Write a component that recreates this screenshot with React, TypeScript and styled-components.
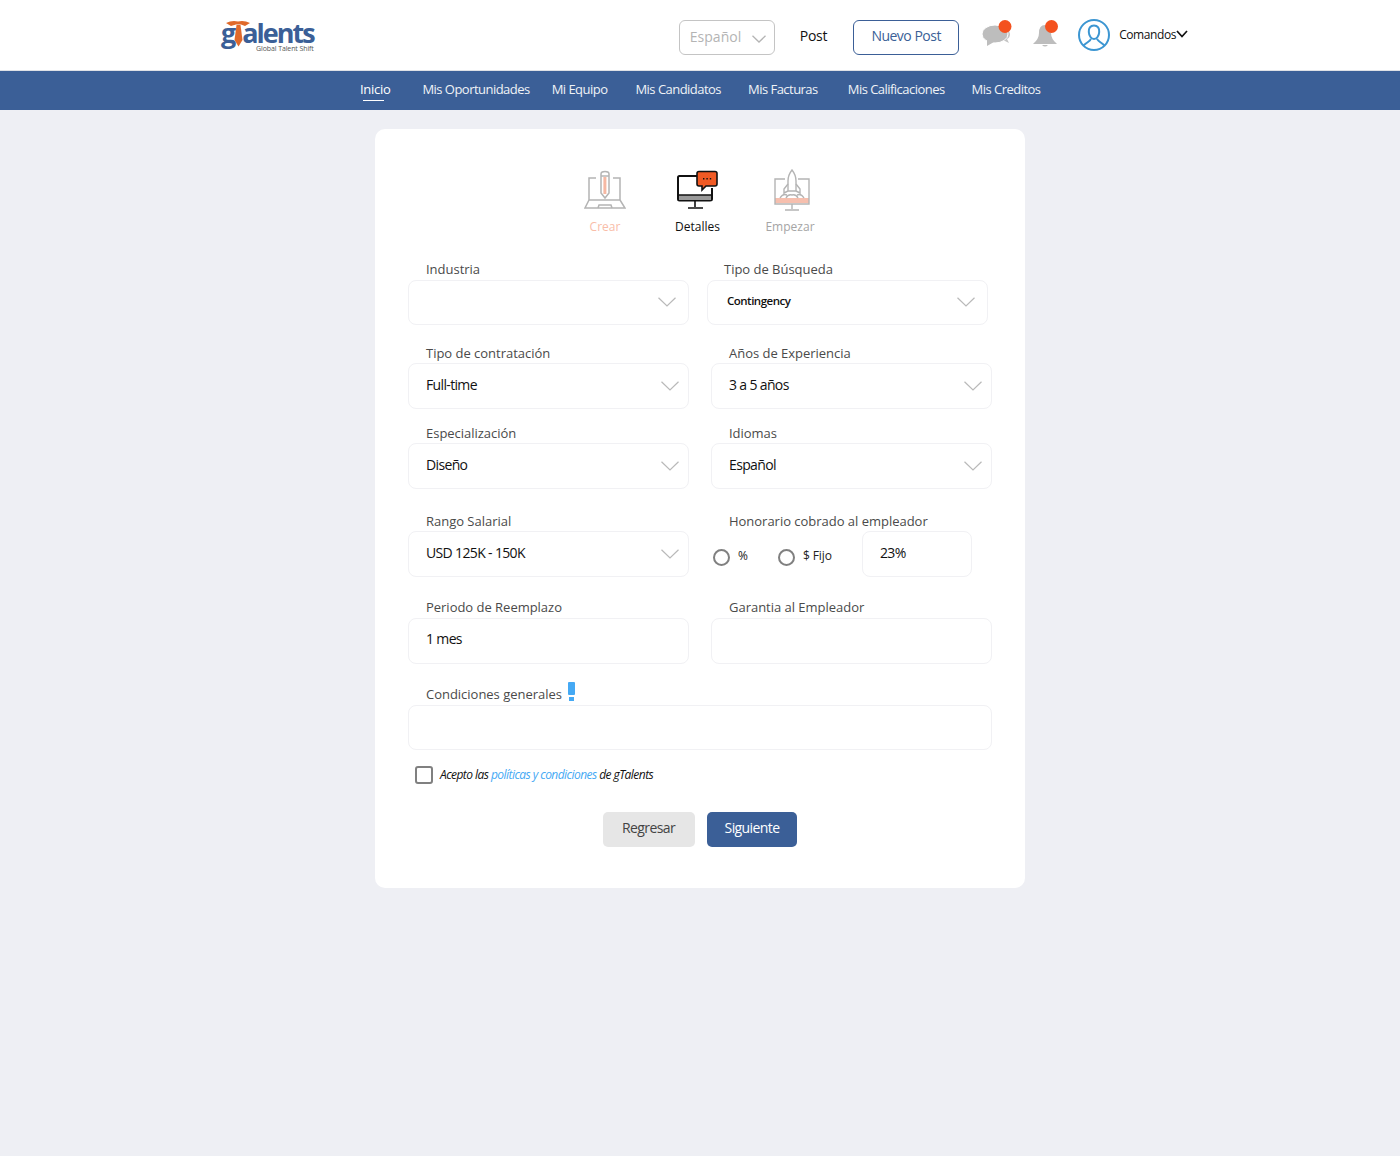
import styled, { createGlobalStyle } from "styled-components";

const GlobalStyle = createGlobalStyle`
  html, body {
    margin: 0;
    padding: 0;
    background: #eeeff4;
    font-family: "Open Sans", "Liberation Sans", sans-serif;
  }
  * {
    box-sizing: border-box;
  }
`;

const Page = styled.div`
  min-height: 1156px;
  background: #eeeff4;
`;

const Header = styled.header`
  height: 71px;
  background: #fff;
  border-bottom: 1px solid #dfe1e6;
  display: flex;
  align-items: flex-start;
  padding: 0 212px 0 221px;
`;

const Logo = styled.div`
  width: 100px;
  margin-top: 20px;
  display: flex;
  flex-direction: column;
  color: #3b5f97;
`;

const LogoWord = styled.div`
  display: flex;
  align-items: flex-start;
  height: 26px;
  font-size: 27px;
  line-height: 26px;
  font-weight: 700;
  letter-spacing: -2px;
`;

const LogoTag = styled.div`
  margin: -1px 0 0 35px;
  font-size: 7px;
  line-height: 7px;
  color: #555;
  letter-spacing: -0.1px;
  white-space: nowrap;
`;

const TieMark = styled.svg`
  flex: none;
  margin: 0 -8px 0 -8px;
`;

const HeaderRight = styled.div`
  margin-left: auto;
  display: flex;
  align-items: center;
  height: 70px;
`;

const LangSelect = styled.div`
  width: 96px;
  height: 35px;
  margin-top: 5px;
  border: 1px solid #c4c4c4;
  border-radius: 6px;
  display: flex;
  align-items: center;
  justify-content: space-between;
  padding: 0 8px 2px 10px;
  font-size: 14px;
  color: #b4b4b4;

  svg {
    margin-top: 4px;
  }
`;

const PostLink = styled.span`
  margin-left: 25px;
  font-size: 14px;
  letter-spacing: -0.3px;
  color: #111;
`;

const NewPost = styled.button`
  width: 106px;
  height: 35px;
  margin: 5px 0 0 26px;
  border: 1px solid #3b5f97;
  border-radius: 6px;
  background: #fff;
  font-family: inherit;
  font-size: 14px;
  letter-spacing: -0.5px;
  color: #3b5f97;
  padding: 0 0 5px;
`;

const ChatIcon = styled.svg`
  margin: 0 0 2px 23px;
  display: block;
`;

const BellIcon = styled.svg`
  margin: 0 0 2px 20px;
  display: block;
`;

const UserIcon = styled.svg`
  margin-left: 19px;
  display: block;
`;

const Commands = styled.span`
  margin-left: 9px;
  padding-bottom: 2px;
  display: flex;
  align-items: center;
  font-size: 12px;
  letter-spacing: -0.42px;
  color: #111;
`;

const Nav = styled.nav`
  height: 39px;
  background: #3b5f97;
  display: flex;
  align-items: center;
  padding: 0 0 3px 360px;
`;

const NavItem = styled.a<{ $left: number; $active?: boolean }>`
  position: relative;
  margin-left: ${(p) => p.$left}px;
  font-size: 13px;
  letter-spacing: -0.53px;
  color: #fff;
  white-space: nowrap;
  opacity: ${(p) => (p.$active ? 1 : 0.92)};

  ${(p) =>
    p.$active &&
    `letter-spacing: -0.3px;
    &::after {
      content: "";
      position: absolute;
      left: 3px;
      right: 6px;
      bottom: -3px;
      height: 1px;
      background: #fff;
    }`}
`;

const Card = styled.main`
  width: 650px;
  margin: 19px auto 0;
  padding: 40px 33px 41px;
  background: #fff;
  border-radius: 10px;
`;

const Steps = styled.div`
  display: flex;
  justify-content: center;
  height: 71px;
  padding-right: 5px;
`;

const Step = styled.div<{ $color: string }>`
  width: 92.5px;
  display: flex;
  flex-direction: column;
  align-items: center;
  font-size: 12px;
  letter-spacing: 0.02px;
  color: ${(p) => p.$color};

  svg {
    display: block;
    margin-bottom: 7px;
  }
`;

const Row = styled.div<{ $top: number; $gap?: number }>`
  margin-top: ${(p) => p.$top}px;
  display: grid;
  grid-template-columns: 281px 281px;
  column-gap: ${(p) => p.$gap ?? 22}px;
`;

const WideRow = styled.div<{ $top: number }>`
  margin-top: ${(p) => p.$top}px;
`;

const Label = styled.div<{ $indent?: number; $tall?: boolean }>`
  height: ${(p) => (p.$tall ? 21 : 20)}px;
  padding-left: ${(p) => p.$indent ?? 18}px;
  font-size: 13px;
  line-height: 20px;
  letter-spacing: -0.02px;
  color: #4a4a4a;
  white-space: nowrap;
`;

const Bang = styled.span`
  position: relative;
  display: inline-block;
  width: 7px;
  height: 13px;
  margin: -2px 0 0 6px;
  border-radius: 1px;
  background: #45a9f4;
  vertical-align: top;

  &::after {
    content: "";
    position: absolute;
    left: 1px;
    top: 15px;
    width: 5px;
    height: 4px;
    background: #45a9f4;
  }
`;

const Box = styled.div<{ $short?: boolean; $inset?: number; $small?: boolean }>`
  height: ${(p) => (p.$short ? 45 : 46)}px;
  border: 1px solid #f1f1f4;
  border-radius: 8px;
  display: flex;
  align-items: center;
  justify-content: space-between;
  padding: 0 ${(p) => p.$inset ?? 9}px 4px ${(p) => (p.$small ? 19 : 17)}px;
  font-size: ${(p) => (p.$small ? 11.5 : 14)}px;
  font-weight: ${(p) => (p.$small ? 600 : 400)};
  letter-spacing: ${(p) => (p.$small ? -0.5 : -0.65)}px;
  color: #111;
`;

const PlainBox = styled(Box)`
  padding-bottom: 6px;
`;

const ChevronMark = styled.svg<{ $drop: number }>`
  display: block;
  margin-top: ${(p) => p.$drop}px;
`;

const FeeRow = styled.div`
  display: flex;
  align-items: flex-start;
`;

const FeeOption = styled.label<{ $width: number }>`
  width: ${(p) => p.$width}px;
  height: 46px;
  padding: 3px 0 0 2px;
  display: flex;
  align-items: center;
  gap: 8px;
  font-size: 12px;
  letter-spacing: -0.1px;
  color: #222;
`;

const RadioDot = styled.span`
  width: 17px;
  height: 17px;
  margin-top: 3px;
  border: 2px solid #808080;
  border-radius: 50%;
  flex: none;
`;

const FeeInput = styled(Box)`
  width: 110px;
  margin-left: 1px;
  padding-bottom: 3px;
`;

const TermsRow = styled.div`
  margin: 16px 0 0 7px;
  height: 18px;
  display: flex;
  align-items: center;
  gap: 7px;
  font-size: 12px;
  font-style: italic;
  letter-spacing: -0.55px;
  color: #111;
`;

const TermsText = styled.span`
  padding-bottom: 2px;
`;

const Check = styled.span`
  width: 18px;
  height: 18px;
  border: 2px solid #808080;
  border-radius: 3px;
  flex: none;
`;

const TermsLink = styled.a`
  color: #45a9f4;
`;

const Actions = styled.div`
  margin-top: 28px;
  display: flex;
  justify-content: center;
  gap: 12px;
`;

const ActionButton = styled.button<{ $primary?: boolean }>`
  width: ${(p) => (p.$primary ? 90 : 92)}px;
  height: 35px;
  border: 0;
  border-radius: 5px;
  padding: 0 ${(p) => (p.$primary ? 0 : 1)}px 4px 0;
  font-family: inherit;
  font-size: 14px;
  letter-spacing: -0.6px;
  background: ${(p) => (p.$primary ? "#3b5f97" : "#e6e6e6")};
  color: ${(p) => (p.$primary ? "#fff" : "#444")};
`;

const navItems = [
  { label: "Inicio", left: 0, active: true },
  { label: "Mis Oportunidades", left: 32 },
  { label: "Mi Equipo", left: 22 },
  { label: "Mis Candidatos", left: 28 },
  { label: "Mis Facturas", left: 27 },
  { label: "Mis Calificaciones", left: 30 },
  { label: "Mis Creditos", left: 27 },
];

function Chevron({ drop }: { drop: number }) {
  return (
    <ChevronMark $drop={drop} width="18" height="10" viewBox="0 0 18 10" fill="none">
      <path d="M0.5 0.8 L9 9 L17.5 0.8" stroke="#b9b9b9" strokeWidth="1.2" />
    </ChevronMark>
  );
}

function Tie() {
  return (
    <TieMark width="24" height="27" viewBox="0 0 24 27">
      <path d="M0 3 Q6 0 12 1.5 Q18 0 24 3 L19 6 L15 4.5 H10 L5 6 Z" fill="#e0692a" />
      <path d="M10.5 5 H14.5 L16.5 20 L12.5 26.5 L8.5 20 Z" fill="#e0692a" />
    </TieMark>
  );
}

function CreateIcon() {
  return (
    <svg width="42" height="42" viewBox="0 0 42 42" fill="none" stroke="#b4b4b4" strokeWidth="1.5">
      <path d="M12 9 H5 V31 H36 V9 H29" />
      <path d="M5 31 L1 39 H41 L36 31" />
      <path d="M14 39 L15 36 H27 L28 39" />
      <rect x="19.4" y="8" width="3" height="17" fill="#f6b8a3" stroke="none" />
      <path d="M17 5 Q17 2.5 21 2.5 Q25 2.5 25 5 V24 L21 29 L17 24 Z" />
      <path d="M17 7 H25" />
    </svg>
  );
}

function DetailsIcon() {
  return (
    <svg width="42" height="42" viewBox="1 0 42 42" fill="none" stroke="#111" strokeWidth="2">
      <path d="M21 7 H3.5 Q2 7 2 8.5 V30 Q2 31.5 3.5 31.5 H34 Q36 31.5 36 30 V19" />
      <rect x="3" y="26" width="32" height="5" fill="#999" stroke="none" />
      <path d="M2 26 H36" strokeWidth="1.5" />
      <path d="M19 32 V38 M12 39 H27" strokeWidth="1.6" />
      <path
        d="M23 2.5 H39 Q41 2.5 41 4.5 V15 Q41 17 39 17 H30 L26 21 V17 H23 Q21 17 21 15 V4.5 Q21 2.5 23 2.5 Z"
        fill="#f15a24"
        strokeWidth="1.6"
      />
      <path d="M27 9.8 H28.4 M30.4 9.8 H31.8 M33.8 9.8 H35.2" strokeWidth="1.4" />
    </svg>
  );
}

function LaunchIcon() {
  return (
    <svg width="42" height="42" viewBox="-4 0 42 42" fill="none" stroke="#b4b4b4" strokeWidth="1.4">
      <rect x="2" y="29" width="34" height="5" fill="#f6bfae" stroke="none" />
      <path d="M12 10 H2 V35 H36 V10 H25" />
      <path d="M19 35 V40 M12 41 H26" />
      <path d="M19 1 Q23 6 23 12 V22 H15 V12 Q15 6 19 1 Z" fill="#fff" />
      <path d="M15 15 L11 20 V24 L15 22 M23 15 L27 20 V24 L23 22" />
      <path d="M7 29 Q10 24 14 26 M31 29 Q28 24 24 26 M13 29 Q15 25 19 26 Q23 25 25 29" />
    </svg>
  );
}

function ChatBubbles() {
  return (
    <ChatIcon width="31" height="28" viewBox="0 0 31 28">
      <path d="M18 7 Q27 7 28 14 Q28 18 25 19 L27 23 L21 20 Z" fill="#c4c4c4" />
      <ellipse cx="13" cy="14" rx="13" ry="9" fill="#bdbdbd" stroke="#fff" strokeWidth="1" />
      <path d="M5 19 L5 26 L12 22 Z" fill="#bdbdbd" />
      <circle cx="23" cy="6.5" r="6.5" fill="#f4511e" />
    </ChatIcon>
  );
}

function Bell() {
  return (
    <BellIcon width="26" height="28" viewBox="0 0 26 28">
      <path d="M12 5 Q6 5 6 13 Q6 19 0 24 H24 Q18 19 18 13 Q18 5 12 5 Z" fill="#bdbdbd" />
      <path d="M9 25 Q12 28 15 25 Z" fill="#bdbdbd" />
      <circle cx="18.5" cy="6.5" r="6.5" fill="#f4511e" />
    </BellIcon>
  );
}

function UserAvatar() {
  return (
    <UserIcon width="32" height="32" viewBox="0 0 32 32" fill="none" stroke="#3c96d2" strokeWidth="2">
      <circle cx="16" cy="16" r="15" />
      <path d="M16 6.5 C12.2 6.5 10.5 9.5 10.8 13 C11 17 13.3 20 16 20 C18.7 20 21 17 21.2 13 C21.5 9.5 19.8 6.5 16 6.5 Z" />
      <path d="M13 19.5 C12.8 22 9 23 5.5 26.5 M19 19.5 C19.2 22 23 23 26.5 26.5" />
    </UserIcon>
  );
}

function SelectBox({ value, small, short, inset }: { value?: string; small?: boolean; short?: boolean; inset?: number }) {
  return (
    <Box $small={small} $short={short} $inset={inset}>
      <span>{value}</span>
      <Chevron drop={short ? 3 : 4} />
    </Box>
  );
}

export default function App() {
  return (
    <Page>
      <GlobalStyle />
      <Header>
        <Logo>
          <LogoWord>
            <span>g</span>
            <Tie />
            <span>alents</span>
          </LogoWord>
          <LogoTag>Global Talent Shift</LogoTag>
        </Logo>
        <HeaderRight>
          <LangSelect>
            Español
            <svg width="14" height="8" viewBox="0 0 14 8" fill="none">
              <path d="M0.5 0.8 L7 7 L13.5 0.8" stroke="#b4b4b4" strokeWidth="1.3" />
            </svg>
          </LangSelect>
          <PostLink>Post</PostLink>
          <NewPost>Nuevo Post</NewPost>
          <ChatBubbles />
          <Bell />
          <UserAvatar />
          <Commands>
            Comandos
            <svg width="12" height="8" viewBox="0 0 12 8" fill="none">
              <path d="M1 1 L6 6.5 L11 1" stroke="#111" strokeWidth="1.7" />
            </svg>
          </Commands>
        </HeaderRight>
      </Header>

      <Nav>
        {navItems.map((item) => (
          <NavItem key={item.label} $left={item.left} $active={item.active}>
            {item.label}
          </NavItem>
        ))}
      </Nav>

      <Card>
        <Steps>
          <Step $color="#f9bda8">
            <CreateIcon />
            Crear
          </Step>
          <Step $color="#111">
            <DetailsIcon />
            Detalles
          </Step>
          <Step $color="#a5a5a5">
            <LaunchIcon />
            Empezar
          </Step>
        </Steps>

        <Row $top={19} $gap={18}>
          <div>
            <Label $tall>Industria</Label>
            <SelectBox short inset={12} />
          </div>
          <div>
            <Label $tall $indent={17}>
              Tipo de Búsqueda
            </Label>
            <SelectBox value="Contingency" small short inset={12} />
          </div>
        </Row>

        <Row $top={18}>
          <div>
            <Label>Tipo de contratación</Label>
            <SelectBox value="Full-time" />
          </div>
          <div>
            <Label>Años de Experiencia</Label>
            <SelectBox value="3 a 5 años" />
          </div>
        </Row>

        <Row $top={14}>
          <div>
            <Label>Especialización</Label>
            <SelectBox value="Diseño" />
          </div>
          <div>
            <Label>Idiomas</Label>
            <SelectBox value="Español" />
          </div>
        </Row>

        <Row $top={22}>
          <div>
            <Label>Rango Salarial</Label>
            <SelectBox value="USD 125K - 150K" />
          </div>
          <div>
            <Label>Honorario cobrado al empleador</Label>
            <FeeRow>
              <FeeOption $width={65}>
                <RadioDot />%
              </FeeOption>
              <FeeOption $width={85}>
                <RadioDot />$ Fijo
              </FeeOption>
              <FeeInput>23%</FeeInput>
            </FeeRow>
          </div>
        </Row>

        <Row $top={20}>
          <div>
            <Label $tall>Periodo de Reemplazo</Label>
            <PlainBox>1 mes</PlainBox>
          </div>
          <div>
            <Label $tall>Garantia al Empleador</Label>
            <PlainBox />
          </div>
        </Row>

        <WideRow $top={20}>
          <Label $tall>
            Condiciones generales
            <Bang />
          </Label>
          <Box $short />
        </WideRow>

        <TermsRow>
          <Check />
          <TermsText>
            Acepto las <TermsLink>políticas y condiciones</TermsLink> de gTalents
          </TermsText>
        </TermsRow>

        <Actions>
          <ActionButton>Regresar</ActionButton>
          <ActionButton $primary>Siguiente</ActionButton>
        </Actions>
      </Card>
    </Page>
  );
}
